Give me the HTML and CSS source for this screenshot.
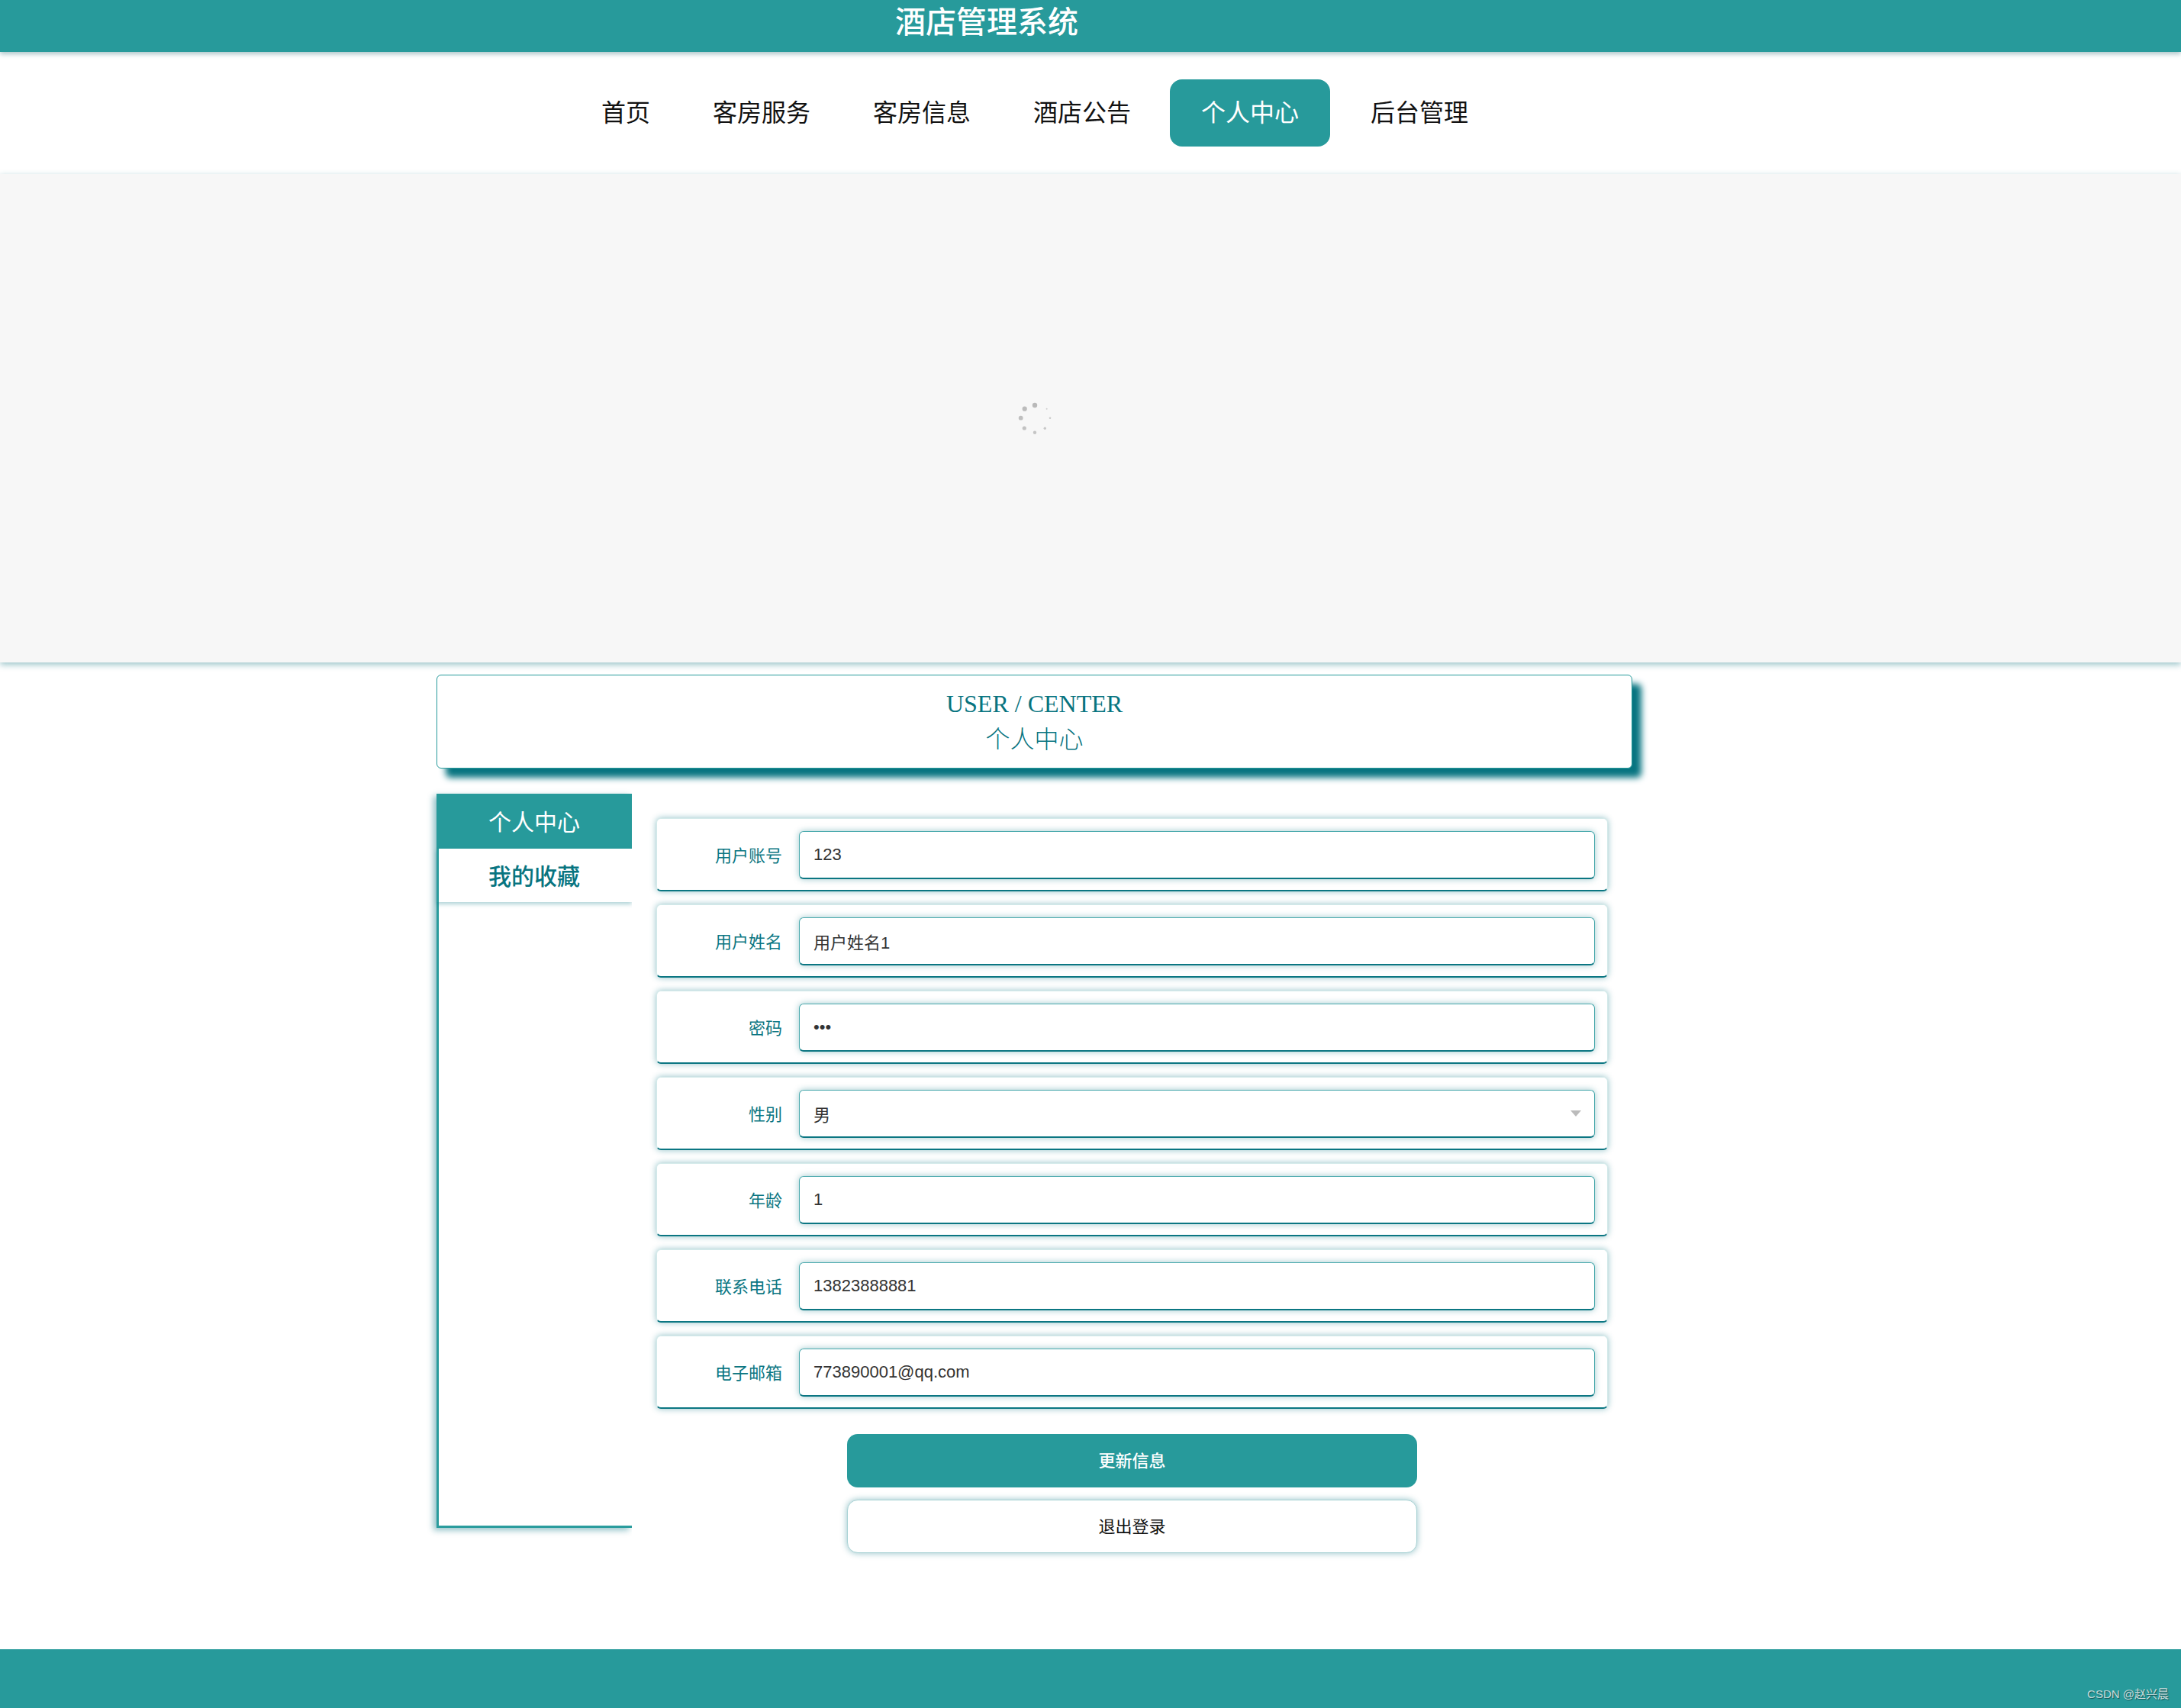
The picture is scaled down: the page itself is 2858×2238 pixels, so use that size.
FILE: index.html
```html
<!DOCTYPE html>
<html lang="zh-CN">
<head>
<meta charset="utf-8">
<title>酒店管理系统</title>
<link rel="stylesheet" href="styles.css">
</head>
<body>
<header class="topbar">
  <div class="site-title">酒店管理系统</div>
</header>
<nav class="nav">
  <a class="nav-item">首页</a>
  <a class="nav-item">客房服务</a>
  <a class="nav-item">客房信息</a>
  <a class="nav-item">酒店公告</a>
  <a class="nav-item active">个人中心</a>
  <a class="nav-item">后台管理</a>
</nav>
<section class="banner">
  <div class="wrap banner-inner">
    <svg class="spinner" width="60" height="60" viewBox="0 0 60 60">
      <circle cx="29" cy="13" r="3.2" fill="#b9b9b9"/>
      <circle cx="15.7" cy="17.7" r="3.1" fill="#bcbcbc"/>
      <circle cx="10.7" cy="29.7" r="2.9" fill="#bfbfbf"/>
      <circle cx="15.3" cy="43" r="2.6" fill="#c2c2c2"/>
      <circle cx="29" cy="48.7" r="2.2" fill="#c5c5c5"/>
      <circle cx="42.3" cy="43.3" r="1.7" fill="#c8c8c8"/>
      <circle cx="49" cy="29.7" r="1.3" fill="#cbcbcb"/>
      <circle cx="44.7" cy="17.7" r="1" fill="#cecece"/>
    </svg>
  </div>
</section>
<main class="wrap main">
  <div class="title-box">
    <div class="title-en">USER / CENTER</div>
    <div class="title-cn">个人中心</div>
  </div>
  <div class="content">
    <aside class="sidebar">
      <div class="side-item active">个人中心</div>
      <div class="side-item">我的收藏</div>
    </aside>
    <form class="form">
      <div class="row">
        <label class="label">用户账号</label>
        <input class="field" type="text" value="123" readonly>
      </div>
      <div class="row">
        <label class="label">用户姓名</label>
        <input class="field" type="text" value="用户姓名1" readonly>
      </div>
      <div class="row">
        <label class="label">密码</label>
        <input class="field" type="password" value="123" readonly>
      </div>
      <div class="row">
        <label class="label">性别</label>
        <div class="field select">
          <span>男</span>
          <span class="caret"></span>
        </div>
      </div>
      <div class="row">
        <label class="label">年龄</label>
        <input class="field" type="text" value="1" readonly>
      </div>
      <div class="row">
        <label class="label">联系电话</label>
        <input class="field" type="text" value="13823888881" readonly>
      </div>
      <div class="row">
        <label class="label">电子邮箱</label>
        <input class="field" type="text" value="773890001@qq.com" readonly>
      </div>
      <button type="button" class="btn btn-primary">更新信息</button>
      <button type="button" class="btn btn-plain">退出登录</button>
    </form>
  </div>
</main>
<footer class="footer">
  <span class="watermark">CSDN @赵兴晨</span>
</footer>
</body>
</html>
```

FILE: styles.css
```css
html, body {
  margin: 0;
  padding: 0;
  background: #ffffff;
  font-family: "Liberation Sans", "Noto Sans CJK SC", sans-serif;
}

.topbar {
  height: 68px;
  background: #279a9b;
  display: flex;
  align-items: flex-start;
  box-shadow: 0 3px 6px rgba(20, 90, 100, 0.35);
  position: relative;
  z-index: 2;
}

.site-title {
  margin-left: 1173px;
  font-size: 40px;
  line-height: 52px;
  color: #ffffff;
  font-weight: 500;
  font-family: "Noto Sans CJK SC", sans-serif;
}

.nav {
  height: 160px;
  display: flex;
  align-items: center;
  padding-left: 747px;
  background: #ffffff;
}

.nav-item {
  display: block;
  height: 88px;
  line-height: 82px;
  padding: 0 41px 6px;
  box-sizing: border-box;
  font-size: 32px;
  color: #111111;
  font-family: "Noto Sans CJK SC", sans-serif;
  font-weight: 400;
  border-radius: 16px;
}

.nav-item.active {
  margin: 0 12px 0 10px;
  background: #279a9b;
  color: #ffffff;
}

.banner {
  height: 640px;
  background: #f7f7f7;
  box-shadow: 0 3px 8px rgba(8, 110, 122, 0.4);
  position: relative;
}

.wrap {
  width: 1567px;
  margin-left: 572px;
}

.banner-inner {
  height: 100%;
  display: flex;
  justify-content: center;
  align-items: center;
}

.spinner {
  margin-left: 3px;
}

.main {
  padding-top: 16px;
}

.title-box {
  height: 123px;
  box-sizing: border-box;
  border: 1px solid #279a9b;
  border-radius: 6px;
  background: #ffffff;
  box-shadow: 12px 12px 8px #077480;
  text-align: center;
  padding-top: 17px;
  color: #087480;
}

.title-en {
  font-family: "Liberation Serif", serif;
  font-size: 32px;
  line-height: 40px;
}

.title-cn {
  font-family: "Noto Sans CJK SC", serif;
  font-weight: 300;
  font-size: 32px;
  line-height: 48px;
}

.content {
  display: flex;
  align-items: flex-start;
  margin-top: 33px;
}

.sidebar {
  width: 256px;
  min-height: 962px;
  box-sizing: border-box;
  border-left: 3px solid #2a9c9d;
  border-bottom: 3px solid #2a9c9d;
  background: #ffffff;
  box-shadow: -4px 3px 8px rgba(8, 116, 128, 0.45);
  clip-path: inset(-20px 0 -20px -20px);
  flex-shrink: 0;
}

.side-item {
  height: 70px;
  line-height: 68px;
  text-align: center;
  font-size: 30px;
  color: #087480;
  font-family: "Noto Sans CJK SC", sans-serif;
  font-weight: 500;
  box-shadow: 0 3px 5px rgba(8, 116, 128, 0.3);
  margin-left: -3px;
}

.side-item.active {
  height: 72px;
  line-height: 70px;
  background: #279a9b;
  color: #ffffff;
  font-weight: 400;
  box-shadow: none;
}

.form {
  width: 1247px;
  margin: 0 0 0 32px;
  padding-top: 32px;
  display: flex;
  flex-direction: column;
}

.row {
  height: 96px;
  box-sizing: border-box;
  display: flex;
  align-items: center;
  padding: 0 16px;
  margin-bottom: 17px;
  background: #ffffff;
  border: 1px solid #d4eaea;
  border-bottom: 2px solid #0b7682;
  border-radius: 6px;
  box-shadow: 0 0 9px rgba(8, 116, 128, 0.45);
}

.row:last-of-type {
  margin-bottom: 0;
}

.label {
  width: 148px;
  margin-right: 22px;
  margin-top: -2px;
  text-align: right;
  font-size: 22px;
  color: #0b7682;
  font-family: "Noto Sans CJK SC", sans-serif;
  flex-shrink: 0;
}

.field {
  flex: 1;
  height: 63px;
  box-sizing: border-box;
  border: 1px solid #4aa9ad;
  border-bottom: 2px solid #0b7682;
  border-radius: 6px;
  box-shadow: 0 0 8px rgba(8, 116, 128, 0.4);
  padding: 0 18px;
  font-size: 22px;
  color: #333333;
  font-family: "Liberation Sans", "Noto Sans CJK SC", sans-serif;
  background: #ffffff;
  outline: none;
  margin-top: 1px;
}

.select {
  display: flex;
  align-items: center;
  justify-content: space-between;
}

.caret {
  width: 0;
  height: 0;
  border-left: 7px solid transparent;
  border-right: 7px solid transparent;
  border-top: 8px solid #bbbbbb;
  margin-right: -1px;
}

.btn {
  align-self: center;
  width: 747px;
  height: 70px;
  border-radius: 14px;
  font-size: 22px;
  font-family: "Noto Sans CJK SC", sans-serif;
  cursor: pointer;
  padding: 0 0 4px;
}

.btn-primary {
  margin-top: 33px;
  background: #279a9b;
  color: #ffffff;
  border: none;
  font-weight: 500;
}

.btn-plain {
  margin-top: 16px;
  background: #ffffff;
  color: #111111;
  border: 1px solid #a8d2d4;
  box-shadow: 0 0 8px rgba(8, 116, 128, 0.45);
}

.footer {
  margin-top: 126px;
  height: 77px;
  background: #279a9b;
  display: flex;
  justify-content: flex-end;
  align-items: flex-end;
  padding: 0 16px 9px 0;
  box-sizing: border-box;
}

.watermark {
  font-size: 15px;
  color: #c9dcdc;
  text-shadow: 1px 1px 1px rgba(0, 0, 0, 0.45);
  font-family: "Liberation Sans", "Noto Sans CJK SC", sans-serif;
}
```
